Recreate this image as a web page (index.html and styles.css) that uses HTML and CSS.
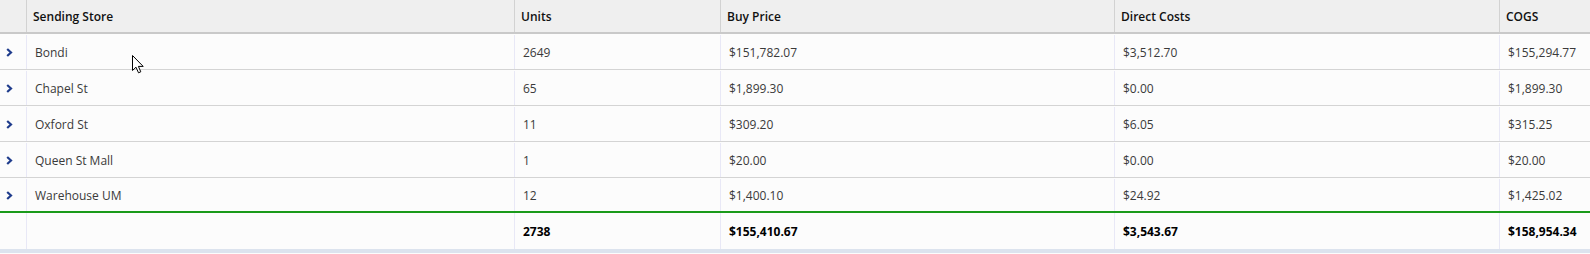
FILE: index.html
```html
<!DOCTYPE html>
<html>
<head>
<meta charset="utf-8">
<link rel="stylesheet" href="styles.css">
</head>
<body>
<div class="grid">
  <div class="row head">
    <div class="cell exp"></div>
    <div class="cell c-store">Sending Store</div>
    <div class="cell c-units">Units</div>
    <div class="cell c-buy">Buy Price</div>
    <div class="cell c-direct">Direct Costs</div>
    <div class="cell c-cogs">COGS</div>
  </div>
  <div class="row body">
    <div class="cell exp"><svg class="chev" viewBox="0 0 7 9"><path d="M1.2 1 L5 4.5 L1.2 8"/></svg></div>
    <div class="cell c-store">Bondi</div>
    <div class="cell c-units">2649</div>
    <div class="cell c-buy">$151,782.07</div>
    <div class="cell c-direct">$3,512.70</div>
    <div class="cell c-cogs">$155,294.77</div>
  </div>
  <div class="row body">
    <div class="cell exp"><svg class="chev" viewBox="0 0 7 9"><path d="M1.2 1 L5 4.5 L1.2 8"/></svg></div>
    <div class="cell c-store">Chapel St</div>
    <div class="cell c-units">65</div>
    <div class="cell c-buy">$1,899.30</div>
    <div class="cell c-direct">$0.00</div>
    <div class="cell c-cogs">$1,899.30</div>
  </div>
  <div class="row body">
    <div class="cell exp"><svg class="chev" viewBox="0 0 7 9"><path d="M1.2 1 L5 4.5 L1.2 8"/></svg></div>
    <div class="cell c-store">Oxford St</div>
    <div class="cell c-units">11</div>
    <div class="cell c-buy">$309.20</div>
    <div class="cell c-direct">$6.05</div>
    <div class="cell c-cogs">$315.25</div>
  </div>
  <div class="row body">
    <div class="cell exp"><svg class="chev" viewBox="0 0 7 9"><path d="M1.2 1 L5 4.5 L1.2 8"/></svg></div>
    <div class="cell c-store">Queen St Mall</div>
    <div class="cell c-units">1</div>
    <div class="cell c-buy">$20.00</div>
    <div class="cell c-direct">$0.00</div>
    <div class="cell c-cogs">$20.00</div>
  </div>
  <div class="row body last">
    <div class="cell exp"><svg class="chev" viewBox="0 0 7 9"><path d="M1.2 1 L5 4.5 L1.2 8"/></svg></div>
    <div class="cell c-store">Warehouse UM</div>
    <div class="cell c-units">12</div>
    <div class="cell c-buy">$1,400.10</div>
    <div class="cell c-direct">$24.92</div>
    <div class="cell c-cogs">$1,425.02</div>
  </div>
  <div class="row foot">
    <div class="cell exp"></div>
    <div class="cell c-store"></div>
    <div class="cell c-units">2738</div>
    <div class="cell c-buy">$155,410.67</div>
    <div class="cell c-direct">$3,543.67</div>
    <div class="cell c-cogs">$158,954.34</div>
  </div>
  <div class="scroll-strip"></div>
  <svg class="cursor" viewBox="0 0 13 19" width="13" height="19"><path d="M0.5 0.5 L0.5 15.5 L4 12.2 L6.5 17.8 L8.8 16.8 L6.4 11.4 L11.2 11.4 Z" fill="#fff" stroke="#000" stroke-width="1" stroke-linejoin="miter"/></svg>
</div>
</body>
</html>
```
FILE: styles.css
```css
html, body {
  margin: 0;
  padding: 0;
  background: #fcfcfc;
}
.grid {
  position: relative;
  width: 1590px;
  font-family: "Open Sans", "Noto Sans", sans-serif;
  font-size: 12px;
  color: #3a3a3a;
}
.row {
  display: grid;
  grid-template-columns: 26px 488px 206px 394px 385px 1fr;
}
.cell {
  display: flex;
  align-items: center;
  padding-left: 8px;
  white-space: nowrap;
  border-left: 1px solid #e8e8f6;
  box-sizing: border-box;
}
.cell.exp {
  border-left: none;
  padding-left: 6px;
}
.head {
  height: 34px;
  background: #efefef;
  border-bottom: 2px solid #c9c9c9;
  box-sizing: border-box;
  color: #111;
  font-weight: 600;
}
.head .cell {
  border-left-color: #d2d2d2;
  padding-left: 6px;
}
.head .cell.exp {
  padding-left: 0;
}
.body {
  height: 36px;
  background: #fcfcfc;
  border-bottom: 1px solid #d4d4d4;
  box-sizing: border-box;
  padding-top: 1px;
}
.body.last {
  height: 35px;
  border-bottom: 2px solid #1a9a1a;
}
.foot {
  height: 36px;
  background: #fcfcfc;
  color: #000;
  font-weight: 700;
}
.chev {
  width: 7px;
  height: 9px;
  fill: none;
  stroke: #1f3c8c;
  stroke-width: 2.2;
}
.scroll-strip {
  height: 4px;
  background: #dce3ee;
}
.cursor {
  position: absolute;
  left: 132px;
  top: 55px;
}
```
